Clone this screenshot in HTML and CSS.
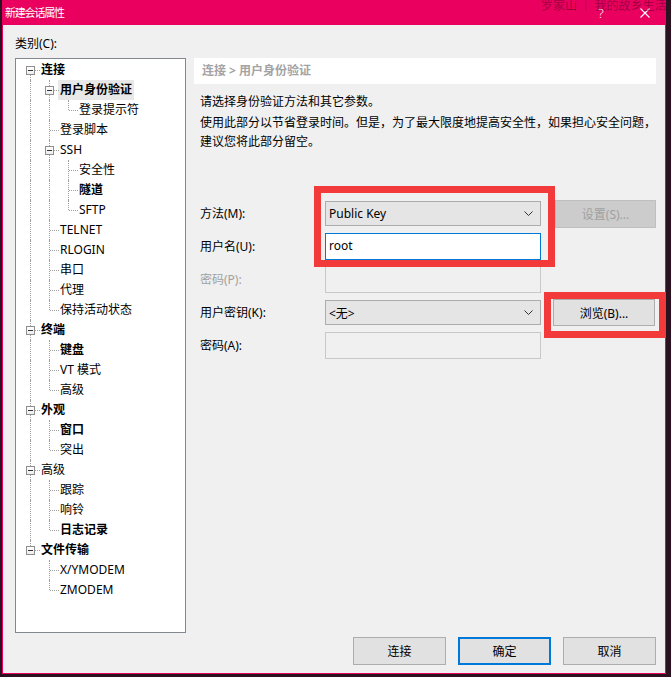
FILE: index.html
```html
<!DOCTYPE html>
<html lang="zh-CN">
<head>
<meta charset="utf-8">
<title>新建会话属性</title>
<link rel="stylesheet" href="styles.css">
</head>
<body>
<div class="window">
  <div class="titlebar">
    <span class="title">新建会话属性</span>
    <span class="cap help">?</span>
    <span class="cap close"><svg width="10" height="10" viewBox="0 0 10 10"><path d="M0.5 0.5L9.5 9.5M9.5 0.5L0.5 9.5" stroke="#fff" stroke-width="1.1" fill="none"/></svg></span>
    <span class="watermark">罗家山 ｜ 我的故乡生活记录</span>
  </div>
  <div class="content">
    <div class="cat-label">类别(C):</div>
    <div class="main">
      <div class="tree">
        <div class="row"><span class="c f"><span class="box"></span></span><span class="lbl b">连接</span></div>
        <div class="row"><span class="c v"></span><span class="c t"><span class="box"></span></span><span class="lbl b sel">用户身份验证</span></div>
        <div class="row"><span class="c v"></span><span class="c v"></span><span class="c l"></span><span class="lbl">登录提示符</span></div>
        <div class="row"><span class="c v"></span><span class="c t"></span><span class="lbl">登录脚本</span></div>
        <div class="row"><span class="c v"></span><span class="c t"><span class="box"></span></span><span class="lbl">SSH</span></div>
        <div class="row"><span class="c v"></span><span class="c v"></span><span class="c t"></span><span class="lbl">安全性</span></div>
        <div class="row"><span class="c v"></span><span class="c v"></span><span class="c t"></span><span class="lbl b">隧道</span></div>
        <div class="row"><span class="c v"></span><span class="c v"></span><span class="c l"></span><span class="lbl">SFTP</span></div>
        <div class="row"><span class="c v"></span><span class="c t"></span><span class="lbl">TELNET</span></div>
        <div class="row"><span class="c v"></span><span class="c t"></span><span class="lbl">RLOGIN</span></div>
        <div class="row"><span class="c v"></span><span class="c t"></span><span class="lbl">串口</span></div>
        <div class="row"><span class="c v"></span><span class="c t"></span><span class="lbl">代理</span></div>
        <div class="row"><span class="c v"></span><span class="c l"></span><span class="lbl">保持活动状态</span></div>
        <div class="row"><span class="c t"><span class="box"></span></span><span class="lbl b">终端</span></div>
        <div class="row"><span class="c v"></span><span class="c t"></span><span class="lbl b">键盘</span></div>
        <div class="row"><span class="c v"></span><span class="c t"></span><span class="lbl">VT 模式</span></div>
        <div class="row"><span class="c v"></span><span class="c l"></span><span class="lbl">高级</span></div>
        <div class="row"><span class="c t"><span class="box"></span></span><span class="lbl b">外观</span></div>
        <div class="row"><span class="c v"></span><span class="c t"></span><span class="lbl b">窗口</span></div>
        <div class="row"><span class="c v"></span><span class="c l"></span><span class="lbl">突出</span></div>
        <div class="row"><span class="c t"><span class="box"></span></span><span class="lbl">高级</span></div>
        <div class="row"><span class="c v"></span><span class="c t"></span><span class="lbl">跟踪</span></div>
        <div class="row"><span class="c v"></span><span class="c t"></span><span class="lbl">响铃</span></div>
        <div class="row"><span class="c v"></span><span class="c l"></span><span class="lbl b">日志记录</span></div>
        <div class="row"><span class="c l"><span class="box"></span></span><span class="lbl b">文件传输</span></div>
        <div class="row"><span class="c"></span><span class="c t"></span><span class="lbl">X/YMODEM</span></div>
        <div class="row"><span class="c"></span><span class="c l"></span><span class="lbl">ZMODEM</span></div>
      </div>
      <div class="panel">
        <div class="crumb">连接 &gt; 用户身份验证</div>
        <p class="desc">请选择身份验证方法和其它参数。</p>
        <p class="desc2">使用此部分以节省登录时间。但是，为了最大限度地提高安全性，如果担心安全问题，<br>建议您将此部分留空。</p>
        <div class="form">
          <span class="flabel">方法(M):</span>
          <div class="select"><span>Public Key</span><svg width="9" height="5" viewBox="0 0 9 5"><path d="M0.5 0.5L4.5 4.5L8.5 0.5" stroke="#333" fill="none"/></svg></div>
          <span class="btn side disabled">设置(S)...</span>

          <span class="flabel">用户名(U):</span>
          <div class="input focus">root</div>
          <span></span>

          <span class="flabel dim">密码(P):</span>
          <div class="input off"></div>
          <span></span>

          <span class="flabel">用户密钥(K):</span>
          <div class="select"><span>&lt;无&gt;</span><svg width="9" height="5" viewBox="0 0 9 5"><path d="M0.5 0.5L4.5 4.5L8.5 0.5" stroke="#333" fill="none"/></svg></div>
          <span class="btn side browse">浏览(B)...</span>

          <span class="flabel">密码(A):</span>
          <div class="input off"></div>
          <span></span>
        </div>
      </div>
    </div>
    <div class="buttons">
      <span class="btn foot">连接</span>
      <span class="btn foot default">确定</span>
      <span class="btn foot">取消</span>
    </div>
  </div>
  <div class="mark mark1"></div>
  <div class="mark mark2"></div>
</div>
</body>
</html>
```

FILE: styles.css
```css
* { box-sizing: border-box; }
html, body { margin: 0; padding: 0; }
body {
  width: 671px;
  height: 677px;
  overflow: hidden;
  background: #2a1220;
  font-family: "Noto Sans", "Noto Sans CJK SC", sans-serif;
  font-size: 12px;
  color: #000;
}
.window {
  position: relative;
  margin-left: 2px;
  width: 664px;
  height: 674px;
  background: #f0f0f0;
  border: 1px solid #ea005e;
  border-top: 0;
  display: flex;
  flex-direction: column;
}
.titlebar {
  position: relative;
  height: 25px;
  flex: none;
  margin: 0 -1px;
  background: #ea005e;
  color: #fff;
  display: flex;
  align-items: center;
  overflow: hidden;
}
.title {
  padding-left: 3px;
  font-size: 11px;
  letter-spacing: -1.2px;
  line-height: 25px;
  font-family: "Noto Sans CJK SC", sans-serif;
}
.cap {
  height: 25px;
  display: flex;
  align-items: center;
  justify-content: center;
}
.help {
  margin-left: auto;
  width: 46px;
  font-size: 13px;
  font-weight: 300;
}
.close { width: 42px; }
.close svg { display: block; }
.watermark {
  position: absolute;
  left: 539px;
  top: -3px;
  font-family: "Noto Sans CJK SC", sans-serif;
  font-size: 12px;
  line-height: 16px;
  white-space: nowrap;
  color: rgba(70, 0, 25, 0.45);
}
.content {
  flex: 1;
  padding: 11px 9px 0 12px;
  display: flex;
  flex-direction: column;
}
.cat-label {
  line-height: 16px;
  margin-bottom: 6px;
}
.main {
  display: grid;
  grid-template-columns: 171px 462px;
  column-gap: 8px;
  height: 575px;
}
.tree {
  background: #fff;
  border: 1px solid #828790;
  padding: 1px 0 0 5px;
}
.row {
  display: flex;
  height: 20px;
  align-items: stretch;
}
.c {
  position: relative;
  width: 19px;
  height: 20px;
  flex: none;
}
.c::before, .c::after {
  content: "";
  position: absolute;
}
.v::before, .t::before {
  left: 9px; top: 0; bottom: 0;
  border-left: 1px dotted #a0a0a0;
}
.l::before {
  left: 9px; top: 0; height: 10px;
  border-left: 1px dotted #a0a0a0;
}
.f::before {
  left: 9px; top: 10px; bottom: 0;
  border-left: 1px dotted #a0a0a0;
}
.t::after, .l::after, .f::after {
  left: 10px; top: 10px; width: 9px;
  border-top: 1px dotted #a0a0a0;
}
.box {
  position: absolute;
  z-index: 1;
  left: 5px;
  top: 6px;
  width: 9px;
  height: 9px;
  border: 1px solid #8f8f8f;
  background: linear-gradient(#fff, #ececec);
}
.box::after {
  content: "";
  position: absolute;
  left: 1px;
  top: 3px;
  width: 5px;
  height: 1px;
  background: #333;
}
.lbl {
  margin-left: -1px;
  padding: 0 2px;
  line-height: 20px;
  white-space: nowrap;
}
.lbl.b { font-weight: 700; }
.lbl.sel { background: #e8e8e8; }

.panel {
  display: flex;
  flex-direction: column;
}
.crumb {
  height: 26px;
  line-height: 26px;
  background: #fff;
  padding-left: 8px;
  color: #a3a3a3;
  font-weight: 700;
}
.desc, .desc2 {
  margin: 0;
  padding-left: 6px;
  line-height: 19px;
  white-space: nowrap;
}
.desc { margin-top: 8px; }
.desc2 { margin-top: 2px; }
.form {
  margin-top: 46px;
  padding-left: 6px;
  display: grid;
  grid-template-columns: 125px 216px 1fr;
  grid-auto-rows: 33px;
  align-items: center;
}
.flabel { line-height: 16px; white-space: nowrap; }
.flabel.dim { color: #a0a0a0; }
.select {
  height: 25px;
  background: #e5e5e5;
  border: 1px solid #acacac;
  display: flex;
  align-items: center;
  justify-content: space-between;
  padding: 0 7px 0 3px;
}
.select svg { display: block; }
.input {
  height: 27px;
  border: 1px solid #c8c8c8;
  padding-left: 3px;
  line-height: 24px;
}
.input.focus {
  background: #fff;
  border-color: #0078d7;
}
.input.off { background: #f0f0f0; }
.btn {
  display: flex;
  align-items: center;
  justify-content: center;
  background: #e1e1e1;
  border: 1px solid #adadad;
  white-space: nowrap;
}
.side {
  margin-left: 13px;
  width: 102px;
  height: 28px;
}
.side.browse { height: 27px; margin-left: 12px; }
.btn.disabled {
  background: #cccccc;
  border-color: #bfbfbf;
  color: #a0a0a0;
  margin-left: 14px;
  width: 101px;
}
.buttons {
  margin-top: 4px;
  display: flex;
  justify-content: flex-end;
  gap: 12px;
}
.foot {
  width: 93px;
  height: 28px;
}
.foot.default {
  border: 2px solid #0078d7;
}
.mark {
  position: absolute;
  border: 7px solid #f23a3a;
}
.mark1 { left: 311px; top: 186px; width: 241px; height: 81px; }
.mark2 { left: 541px; top: 292px; width: 122px; height: 46px; }
```
